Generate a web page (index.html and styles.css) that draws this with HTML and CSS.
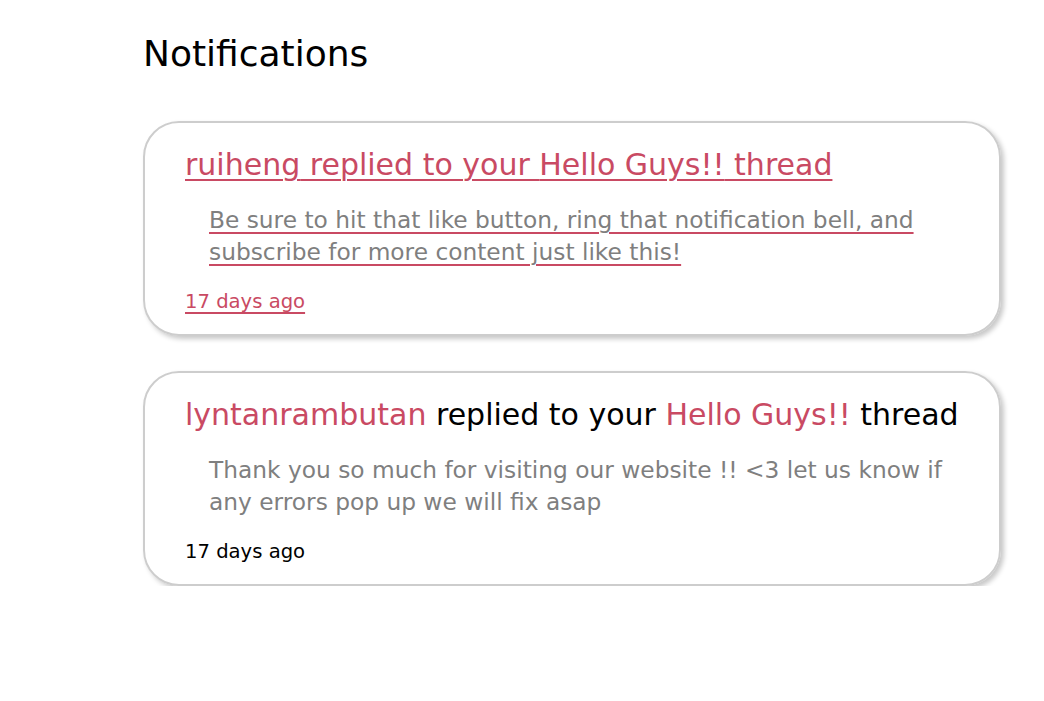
FILE: index.html
```html
<!DOCTYPE html>
<html>
<head>
<meta charset="utf-8">
<link rel="stylesheet" href="styles.css">
</head>
<body>
<main class="page">
  <h1 class="page-title">Notifications</h1>
  <ul class="notif-list">
    <li>
      <a class="notif-card notif-card--hover" href="#">
        <p class="notif-head"><span class="user">ruiheng</span> replied to your <span class="thread">Hello Guys!!</span> thread</p>
        <p class="notif-body">Be sure to hit that like button, ring that notification bell, and subscribe for more content just like this!</p>
        <p class="notif-time">17 days ago</p>
      </a>
    </li>
    <li>
      <a class="notif-card" href="#">
        <p class="notif-head"><span class="user">lyntanrambutan</span> replied to your <span class="thread">Hello Guys!!</span> thread</p>
        <p class="notif-body">Thank you so much for visiting our website !! &lt;3 let us know if any errors pop up we will fix asap</p>
        <p class="notif-time">17 days ago</p>
      </a>
    </li>
  </ul>
</main>
</body>
</html>
```

FILE: styles.css
```css
html, body {
  margin: 0;
  padding: 0;
  background: #fff;
}
body {
  font-family: "DejaVu Sans", sans-serif;
  color: #000;
}
.page {
  padding: 32px 42px 0 143px;
}
.page-title {
  margin: 0;
  font-size: 36px;
  font-weight: 400;
  line-height: 44px;
}
.notif-list {
  list-style: none;
  margin: 45px 0 0 0;
  padding: 0;
  display: flex;
  flex-direction: column;
  gap: 35px;
}
.notif-card {
  display: block;
  width: 858px;
  box-sizing: border-box;
  height: 215px;
  border: 2px solid #cdcdcd;
  border-radius: 36px;
  box-shadow: 3px 3px 5px rgba(0,0,0,0.22);
  padding: 21px 30px 0 40px;
  text-decoration: none;
  color: #000;
}
.notif-card p { margin: 0; }
.notif-head {
  font-size: 30px;
  line-height: 42px;
  white-space: nowrap;
}
.user, .thread { color: #c94a63; }
.notif-body {
  margin-top: 18px !important;
  padding-left: 24px;
  font-size: 23.3px;
  line-height: 32px;
  color: #7f7f7f;
}
.notif-time {
  margin-top: 20px !important;
  font-size: 19.6px;
  line-height: 28px;
}
.notif-card--hover {
  text-decoration: underline;
  text-decoration-color: #c94a63;
  text-underline-offset: 4px;
  text-decoration-thickness: 2px;
}
.notif-card--hover .notif-head,
.notif-card--hover .notif-time { color: #c94a63; }
```
